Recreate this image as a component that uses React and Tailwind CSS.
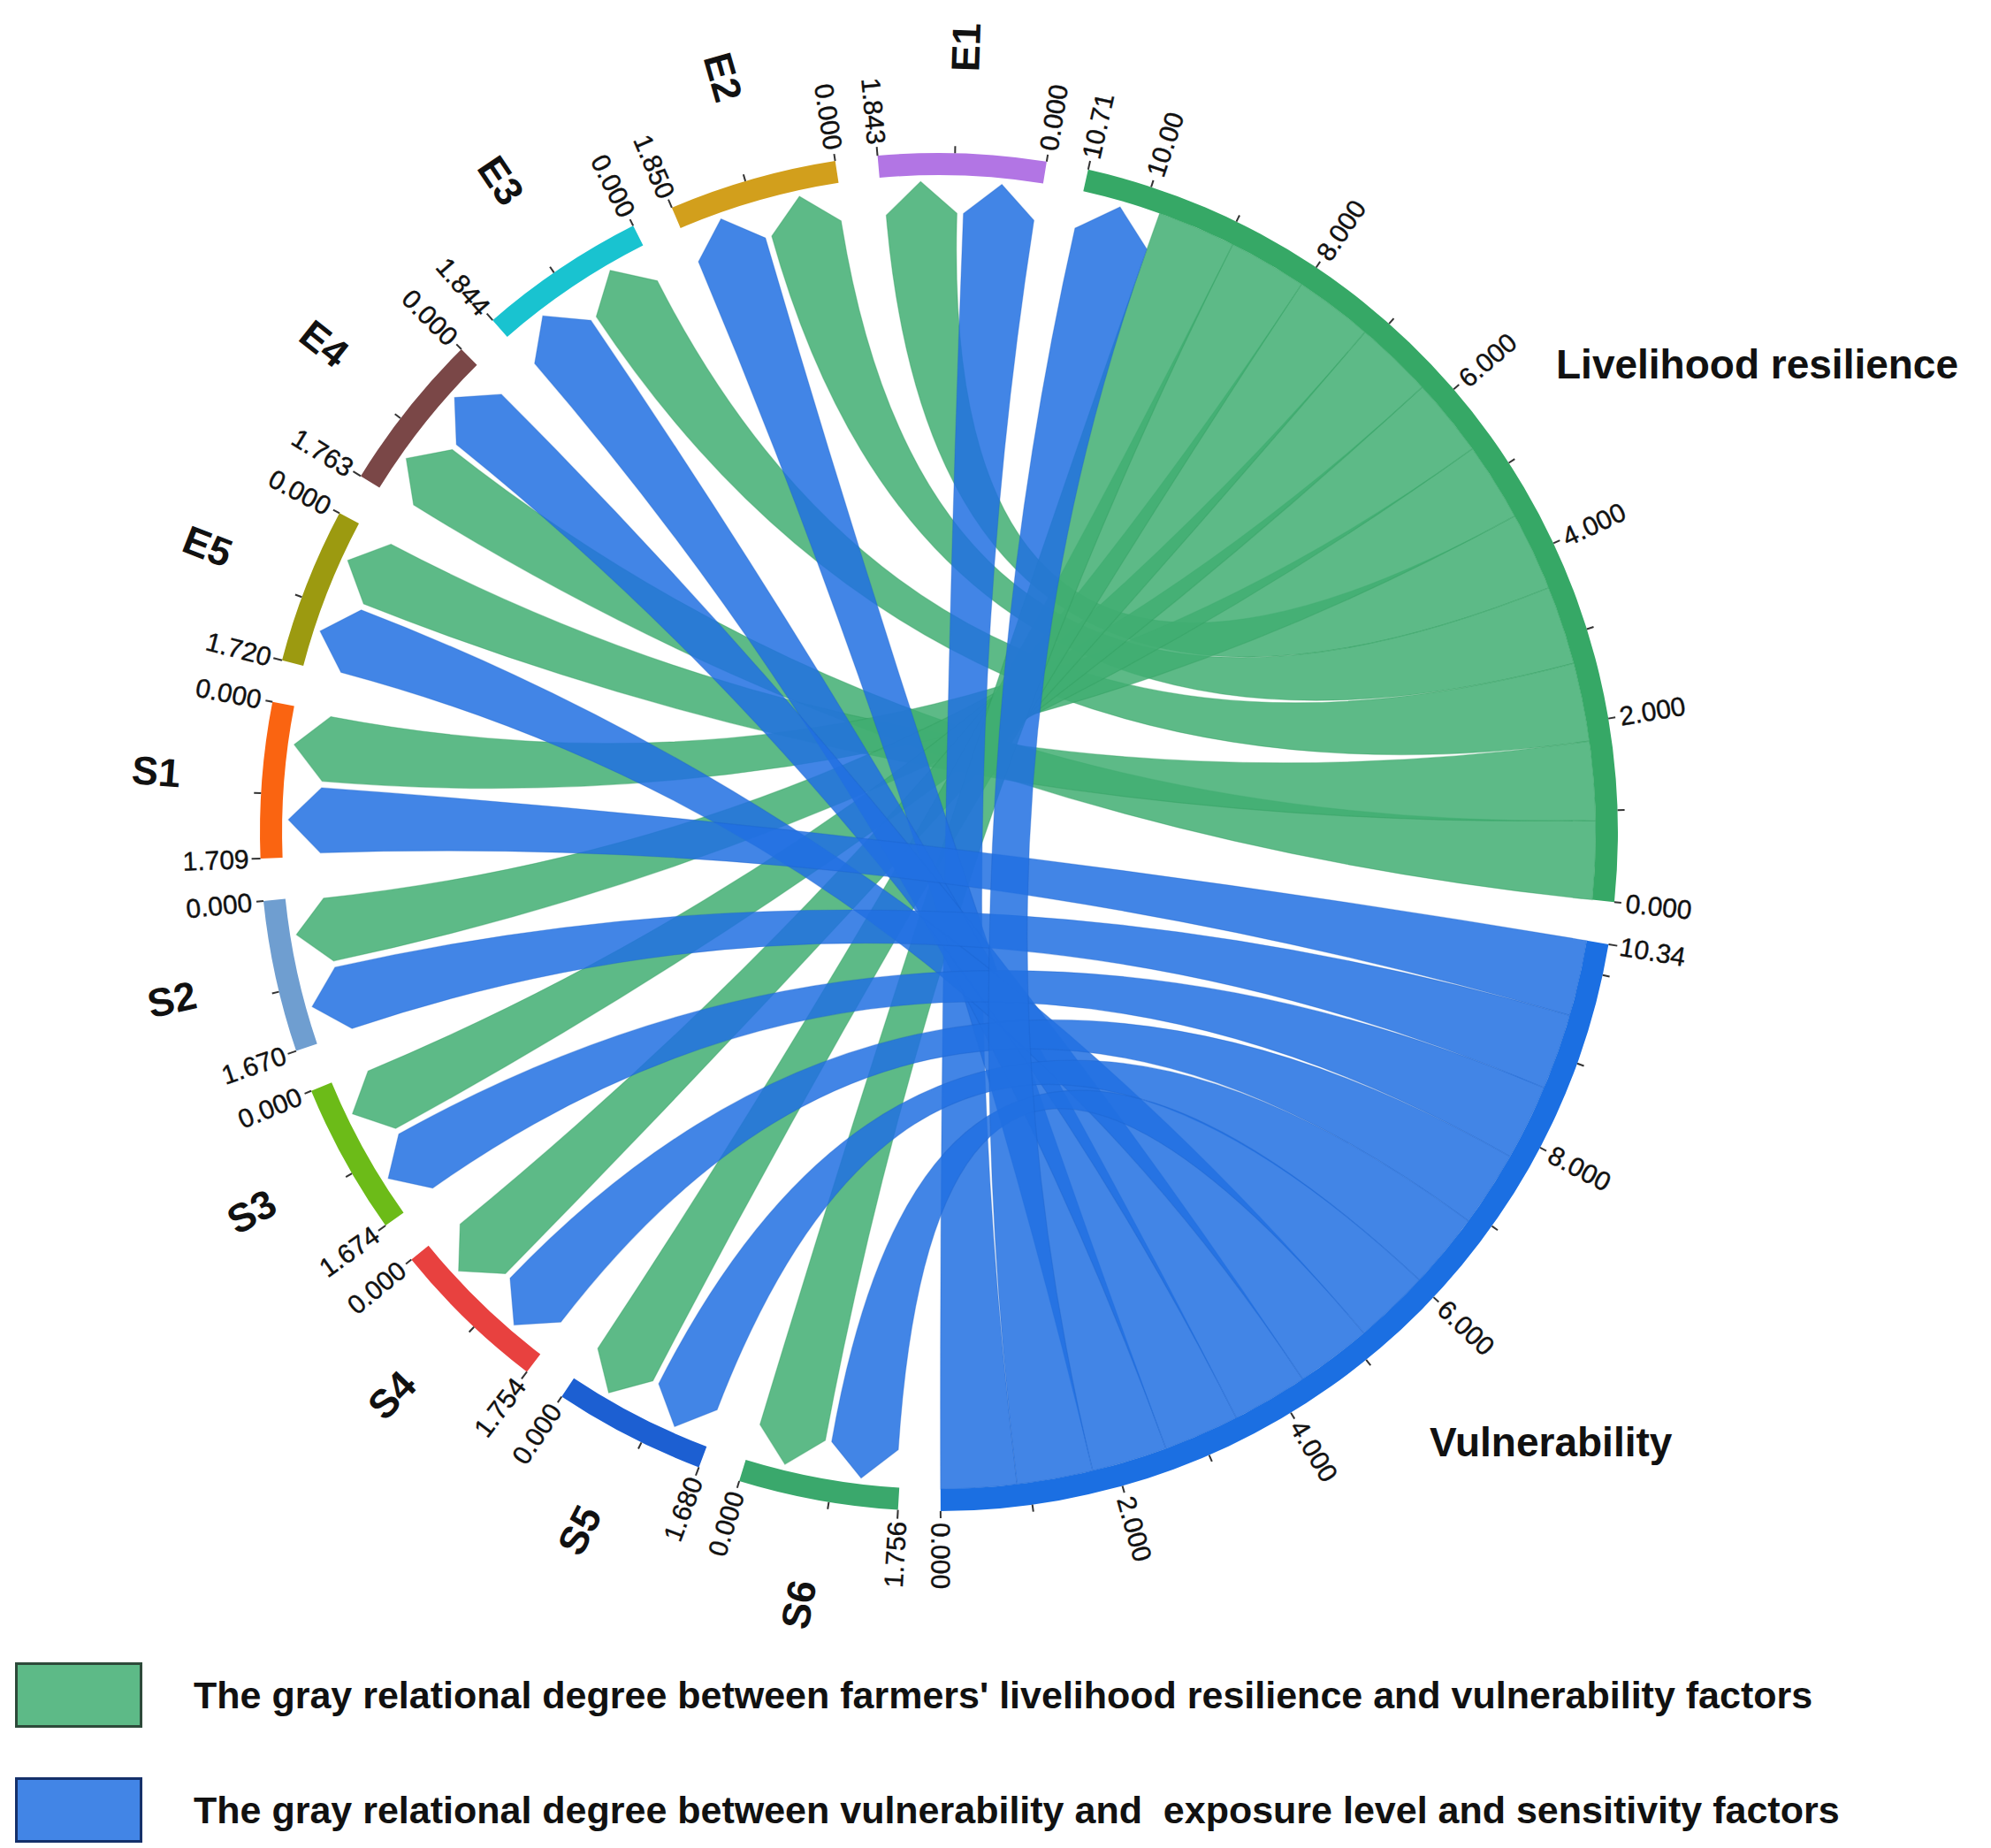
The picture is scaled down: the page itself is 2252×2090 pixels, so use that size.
const CX = 1062;
const CY = 941;
const R_OUT = 768;
const R_IN = 743;
const R_TIP = 736;
const R_SH = 700;
const U = 7.77;
const GAP = 3.6;
const A0 = 12.7;

const SEGS = [
  { id: 'LR', v: 10.71, color: '#36a866' },
  { id: 'V', v: 10.34, color: '#1b6fe2' },
  { id: 'S6', v: 1.756, color: '#3aa86c' },
  { id: 'S5', v: 1.68, color: '#1c5fd2' },
  { id: 'S4', v: 1.754, color: '#e8413f' },
  { id: 'S3', v: 1.674, color: '#6cbb18' },
  { id: 'S2', v: 1.67, color: '#6f9ed0' },
  { id: 'S1', v: 1.709, color: '#fa6411' },
  { id: 'E5', v: 1.72, color: '#9c9a10' },
  { id: 'E4', v: 1.763, color: '#7a4747' },
  { id: 'E3', v: 1.844, color: '#19c3d0' },
  { id: 'E2', v: 1.85, color: '#d29f1c' },
  { id: 'E1', v: 1.843, color: '#b275e4' },
];

// which half of a factor carries the green (g) / blue (b) link, clockwise
const FACTOR_SLOTS = {
  E1: ['g', 'b'],
  E2: ['b', 'g'],
  E3: ['b', 'g'],
  E4: ['g', 'b'],
  E5: ['b', 'g'],
  S1: ['b', 'g'],
  S2: ['b', 'g'],
  S3: ['b', 'g'],
  S4: ['b', 'g'],
  S5: ['b', 'g'],
  S6: ['b', 'g'],
};
const LR_ORDER = ['V', 'S6', 'S5', 'S4', 'S3', 'S2', 'S1', 'E1', 'E2', 'E3', 'E5', 'E4'];
const V_ORDER = ['S1', 'S2', 'S3', 'S4', 'S5', 'S6', 'E5', 'E4', 'E3', 'E2', 'LR', 'E1'];
const FACTORS = ['E1', 'E2', 'E3', 'E4', 'E5', 'S1', 'S2', 'S3', 'S4', 'S5', 'S6'];

const GREEN = '#41ae72';
const BLUE = '#2170e2';

function pt(r, a) {
  const t = (a * Math.PI) / 180;
  return [CX + r * Math.sin(t), CY - r * Math.cos(t)];
}
const p2 = (p) => `${p[0].toFixed(1)} ${p[1].toFixed(1)}`;

const layout = {};
let cursor = A0;
for (const s of SEGS) {
  const span = s.v * U;
  layout[s.id] = { ...s, a1: cursor, a2: cursor + span };
  cursor += span + GAP;
}
const ang = (seg, v) => seg.a1 + (seg.v - v) * U;

function factorSlot(id, kind) {
  const s = layout[id];
  const half = (s.a2 - s.a1) / 2;
  const i = FACTOR_SLOTS[id].indexOf(kind);
  return [s.a1 + i * half + 0.3, s.a1 + (i + 1) * half - 0.3];
}
function bigSlot(id, order, key) {
  const s = layout[id];
  const w = (s.a2 - s.a1) / order.length;
  const i = order.indexOf(key);
  return [s.a1 + i * w, s.a1 + (i + 1) * w];
}

function bandPath(a1, a2) {
  const large = a2 - a1 > 180 ? 1 : 0;
  return `M ${p2(pt(R_OUT, a1))} A ${R_OUT} ${R_OUT} 0 ${large} 1 ${p2(pt(R_OUT, a2))} L ${p2(pt(R_IN, a2))} A ${R_IN} ${R_IN} 0 ${large} 0 ${p2(pt(R_IN, a1))} Z`;
}

// pointed source end, flat target end on the inner edge of the big arc
function ribbon([f1, f2], [g1, g2]) {
  const c = `${CX} ${CY}`;
  return [
    `M ${p2(pt(R_SH, f1))}`,
    `L ${p2(pt(R_TIP, (f1 + f2) / 2))}`,
    `L ${p2(pt(R_SH, f2))}`,
    `Q ${c} ${p2(pt(R_IN, g1))}`,
    `A ${R_IN} ${R_IN} 0 0 1 ${p2(pt(R_IN, g2))}`,
    `Q ${c} ${p2(pt(R_SH, f1))}`,
    'Z',
  ].join(' ');
}

const greens = FACTORS.map((id) => ribbon(factorSlot(id, 'g'), bigSlot('LR', LR_ORDER, id)));
const blues = [
  ...FACTORS.map((id) => ribbon(factorSlot(id, 'b'), bigSlot('V', V_ORDER, id))),
  ribbon(bigSlot('LR', LR_ORDER, 'V'), bigSlot('V', V_ORDER, 'LR')),
];

function labelsFor(seg) {
  if (seg.id === 'LR')
    return [['10.71', 10.71], ['10.00', 10], ['8.000', 8], ['6.000', 6], ['4.000', 4], ['2.000', 2], ['0.000', 0]];
  if (seg.id === 'V')
    return [['10.34', 10.34], ['8.000', 8], ['6.000', 6], ['4.000', 4], ['2.000', 2], ['0.000', 0]];
  return [[seg.v.toFixed(3), seg.v], ['0.000', 0]];
}

function radialText(a, r) {
  const n = ((a % 360) + 360) % 360;
  const right = n < 180;
  const [x, y] = pt(r, a);
  return { x, y, rot: right ? n - 90 : n - 270, anchor: right ? 'start' : 'end' };
}

function Chord() {
  const segs = Object.values(layout);
  return (
    <svg width="2252" height="1860" viewBox="0 0 2252 1860" className="block">
      <g fillOpacity="0.85">
        {greens.map((d, i) => (
          <path key={`g${i}`} d={d} fill={GREEN} stroke="#2f9a5c" strokeOpacity="0.35" strokeWidth="1.2" />
        ))}
        {blues.map((d, i) => (
          <path key={`b${i}`} d={d} fill={BLUE} stroke="#1a5fc8" strokeOpacity="0.3" strokeWidth="1.2" />
        ))}
      </g>

      {segs.map((s) => (
        <path key={s.id} d={bandPath(s.a1, s.a2)} fill={s.color} />
      ))}

      <g stroke="#333" strokeWidth="2">
        {segs.flatMap((s) => {
          const out = [];
          for (let v = 0; v <= Math.floor(s.v); v++) {
            const a = ang(s, v);
            const [x1, y1] = pt(R_OUT, a);
            const [x2, y2] = pt(R_OUT + 8, a);
            out.push(<line key={`${s.id}m${v}`} x1={x1} y1={y1} x2={x2} y2={y2} />);
          }
          const [x1, y1] = pt(R_OUT, s.a1);
          const [x2, y2] = pt(R_OUT + 10, s.a1);
          out.push(<line key={`${s.id}top`} x1={x1} y1={y1} x2={x2} y2={y2} />);
          return out;
        })}
      </g>

      <g fontFamily="'Liberation Sans', Arial, sans-serif" fontSize="30" fill="#111" stroke="#111" strokeWidth="0.4">
        {segs.flatMap((s) =>
          labelsFor(s).map(([txt, v]) => {
            const t = radialText(ang(s, v), R_OUT + 13);
            return (
              <text
                key={`${s.id}-${txt}`}
                x={t.x}
                y={t.y}
                textAnchor={t.anchor}
                dominantBaseline="central"
                transform={`rotate(${t.rot.toFixed(2)} ${t.x.toFixed(1)} ${t.y.toFixed(1)})`}
              >
                {txt}
              </text>
            );
          })
        )}
      </g>

      <g fontFamily="'Liberation Sans', Arial, sans-serif" fontSize="45" fontWeight="700" fill="#111">
        {FACTORS.map((id) => {
          const s = layout[id];
          const t = radialText((s.a1 + s.a2) / 2, 888);
          return (
            <text
              key={`n${id}`}
              x={t.x}
              y={t.y}
              textAnchor="middle"
              dominantBaseline="central"
              transform={`rotate(${t.rot.toFixed(2)} ${t.x.toFixed(1)} ${t.y.toFixed(1)})`}
            >
              {id}
            </text>
          );
        })}
        <text x="1760" y="428" fontSize="46">Livelihood resilience</text>
        <text x="1617" y="1647" fontSize="46">Vulnerability</text>
      </g>
    </svg>
  );
}

function LegendRow({ box, text }) {
  return (
    <div className="flex items-center">
      <div className={`h-[74px] w-[144px] shrink-0 border-[3px] ${box}`} />
      <div className="ml-[58px] whitespace-pre text-[43px] font-bold leading-none text-[#111]">{text}</div>
    </div>
  );
}

export default function App() {
  return (
    <div className="h-[2090px] w-[2252px] overflow-hidden bg-white font-['Liberation_Sans',Arial,sans-serif]">
      <Chord />
      <div className="flex flex-col gap-[56px] pl-[17px] pt-[20px]">
        <LegendRow
          box="border-[#2d4a3a] bg-[#5dba87]"
          text="The gray relational degree between farmers' livelihood resilience and vulnerability factors"
        />
        <LegendRow
          box="border-[#15306a] bg-[#4285e6]"
          text="The gray relational degree between vulnerability and  exposure level and sensitivity factors"
        />
      </div>
    </div>
  );
}
